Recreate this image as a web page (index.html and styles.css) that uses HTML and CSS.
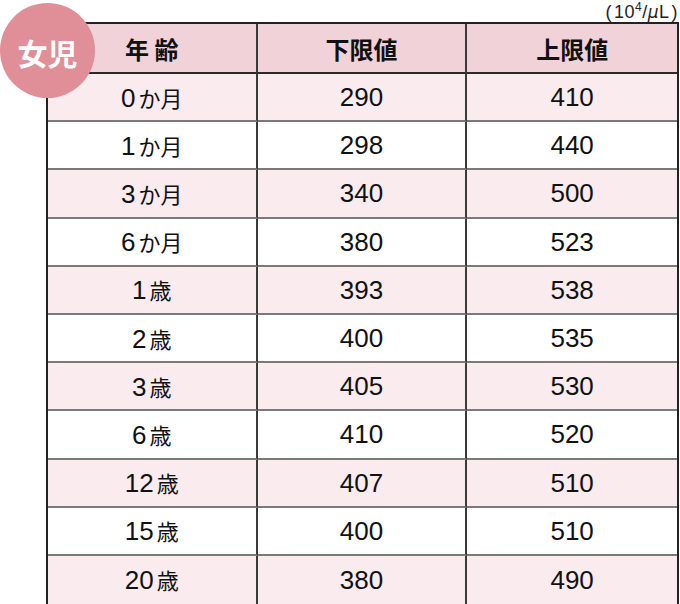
FILE: index.html
```html
<!DOCTYPE html>
<html lang="ja">
<head>
<meta charset="utf-8">
<link rel="stylesheet" href="styles.css">
</head>
<body>
<div class="page">
  <div class="badge">女児</div>
  <div class="unit"><span class="p">(</span>10<sup>4</sup>/<i>μ</i>L<span class="p">)</span></div>
  <table class="tbl">
    <thead>
      <tr><th>年 齢</th><th>下限値</th><th>上限値</th></tr>
    </thead>
    <tbody>
      <tr class="odd"><td>0<span class="u">か月</span></td><td>290</td><td>410</td></tr>
      <tr><td>1<span class="u">か月</span></td><td>298</td><td>440</td></tr>
      <tr class="odd"><td>3<span class="u">か月</span></td><td>340</td><td>500</td></tr>
      <tr><td>6<span class="u">か月</span></td><td>380</td><td>523</td></tr>
      <tr class="odd"><td>1<span class="u">歳</span></td><td>393</td><td>538</td></tr>
      <tr><td>2<span class="u">歳</span></td><td>400</td><td>535</td></tr>
      <tr class="odd"><td>3<span class="u">歳</span></td><td>405</td><td>530</td></tr>
      <tr><td>6<span class="u">歳</span></td><td>410</td><td>520</td></tr>
      <tr class="odd"><td>12<span class="u">歳</span></td><td>407</td><td>510</td></tr>
      <tr><td>15<span class="u">歳</span></td><td>400</td><td>510</td></tr>
      <tr class="odd last"><td>20<span class="u">歳</span></td><td>380</td><td>490</td></tr>
    </tbody>
  </table>
</div>
</body>
</html>
```

FILE: styles.css
```css
html, body {
  margin: 0;
  padding: 0;
  background: #ffffff;
}
body {
  font-family: "Liberation Sans", "Noto Sans CJK JP", sans-serif;
  color: #111111;
}
.page {
  position: relative;
  width: 680px;
  height: 604px;
  padding-left: 46px;
  box-sizing: border-box;
}
.badge {
  position: absolute;
  left: 0;
  top: 3px;
  width: 95px;
  height: 95px;
  border-radius: 50%;
  background: #e08f99;
  color: #ffffff;
  font-family: "Noto Sans CJK JP", sans-serif;
  font-weight: 700;
  font-size: 30px;
  line-height: 98px;
  text-align: center;
  z-index: 2;
}
.unit {
  height: 22px;
  line-height: 24px;
  font-size: 18px;
  text-align: right;
  box-sizing: border-box;
  color: #222222;
  white-space: nowrap;
  letter-spacing: 0.5px;
}
.unit .p {
  display: inline-block;
  margin: 0 2px;
}
.unit sup {
  font-size: 12px;
  vertical-align: 7px;
  line-height: 0;
}
.unit i {
  font-family: "DejaVu Sans", sans-serif;
  font-size: 17px;
}
.tbl {
  width: 633px;
  border-collapse: separate;
  border-spacing: 0;
  border: 2px solid #222222;
  table-layout: fixed;
}
.tbl th, .tbl td {
  box-sizing: border-box;
  padding: 0;
  text-align: center;
  vertical-align: middle;
  border-right: 2px solid #3a3a3a;
  border-bottom: 2px solid #7a7a7a;
}
.tbl th:last-child, .tbl td:last-child {
  border-right: none;
}
.tbl th {
  height: 50px;
  background: #f0d2d8;
  font-family: "Noto Sans CJK JP", sans-serif;
  font-weight: 700;
  font-size: 24px;
  border-bottom-color: #2a2a2a;
}
.tbl td {
  height: 48.2px;
  font-size: 26px;
  line-height: 30px;
  background: #ffffff;
}
.tbl tr.odd td {
  background: #f9ebee;
}
.tbl tr.last td {
  border-bottom: none;
}
.u {
  font-family: "Noto Sans CJK JP", sans-serif;
  font-size: 22px;
  margin-left: 3px;
}
```
